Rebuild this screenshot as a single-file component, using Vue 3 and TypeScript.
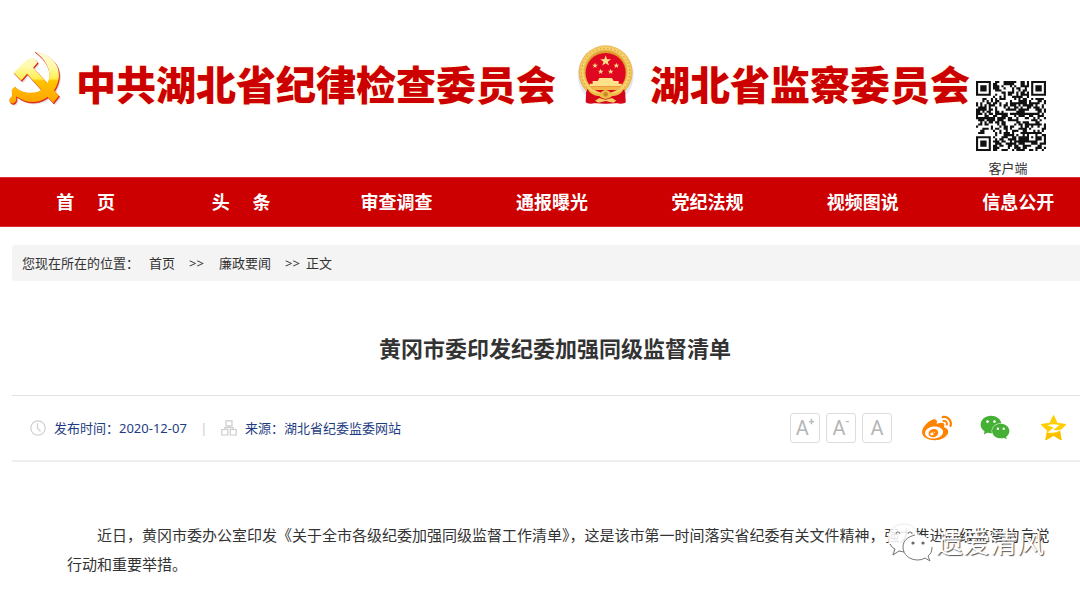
<script setup lang="ts">
interface Module { x: number; y: number }

const navItems: string[] = ['首\u3000 页', '头\u3000 条', '审查调查', '通报曝光', '党纪法规', '视频图说', '信息公开']

const sizeButtons = [
  { label: '放大字号', sign: '+' },
  { label: '缩小字号', sign: '-' },
  { label: '默认字号', sign: '' },
]

const QR_SIZE = 33

function ringed(x: number, y: number, cx: number, cy: number, radius: number): boolean | null {
  const d = Math.max(Math.abs(x - cx), Math.abs(y - cy))
  if (d > radius + 1) return null
  if (radius === 3) return d === 3 || d <= 1
  return d === 2 || d === 0
}

function buildCode(): Module[] {
  const out: Module[] = []
  let seed = 20201207
  for (let y = 0; y < QR_SIZE; y++) {
    for (let x = 0; x < QR_SIZE; x++) {
      seed = (seed * 1103515245 + 12345) % 2147483648
      let dark = (seed >> 12) % 100 < 53
      const marks = [ringed(x, y, 3, 3, 3), ringed(x, y, 29, 3, 3), ringed(x, y, 3, 29, 3)]
      const finder = marks.find((m) => m !== null)
      if (finder !== undefined && finder !== null) dark = finder
      else if (Math.max(Math.abs(x - 26), Math.abs(y - 26)) <= 2) dark = ringed(x, y, 26, 26, 2) === true
      if (dark) out.push({ x, y })
    }
  }
  return out
}

const codePath = buildCode().map((m) => `M${m.x} ${m.y}h1v1h-1z`).join('')

const star = 'M0 -10L2.4 -3.2L9.5 -3.1L3.8 1.2L5.9 8.1L0 4L-5.9 8.1L-3.8 1.2L-9.5 -3.1L-2.4 -3.2z'
const smallStars = [
  { x: 106, y: 90 },
  { x: 170, y: 90 },
  { x: 123, y: 108 },
  { x: 153, y: 108 },
]
const weibo = 'M10.098 20.323c-3.977.391-7.414-1.406-7.672-4.02-.259-2.609 2.759-5.047 6.74-5.441 3.979-.394 7.413 1.404 7.671 4.018.259 2.6-2.759 5.049-6.737 5.439l-.002.004zM9.05 17.219c-.384.616-1.208.884-1.829.602-.612-.279-.793-.991-.406-1.593.379-.595 1.176-.861 1.793-.601.622.263.82.972.442 1.592zm1.27-1.627c-.141.237-.449.353-.689.253-.236-.09-.313-.361-.177-.586.138-.227.436-.346.672-.24.239.09.315.36.18.601l.014-.028zm.176-2.719c-1.893-.493-4.033.45-4.857 2.118-.836 1.704-.026 3.591 1.886 4.21 1.983.64 4.318-.341 5.132-2.179.8-1.793-.201-3.642-2.161-4.149zm7.563-1.224c-.346-.105-.57-.18-.405-.615.375-.977.42-1.804 0-2.404-.781-1.112-2.915-1.053-5.364-.03 0 0-.766.331-.571-.271.376-1.217.315-2.224-.27-2.809-1.338-1.337-4.869.045-7.888 3.08C1.309 10.87 0 13.273 0 15.348c0 3.981 5.099 6.395 10.086 6.395 6.536 0 10.888-3.801 10.888-6.82 0-1.822-1.547-2.854-2.915-3.284v.01zm1.908-5.092c-.766-.856-1.908-1.187-2.96-.962-.436.09-.706.511-.616.932.09.42.511.691.932.602.511-.105 1.067.044 1.442.465.376.421.466.977.316 1.473-.136.406.089.856.51.992.405.119.857-.105.992-.512.33-1.021.12-2.178-.646-3.035l.03.045zm2.418-2.195c-1.576-1.757-3.905-2.419-6.054-1.968-.496.104-.812.587-.706 1.081.104.496.586.813 1.082.707 1.532-.331 3.185.15 4.296 1.383 1.112 1.246 1.429 2.943.947 4.416-.165.48.106 1.007.586 1.157.479.165.991-.104 1.157-.586.675-2.088.241-4.478-1.338-6.235l.03.045z'
const wechat = 'M8.691 2.188C3.891 2.188 0 5.476 0 9.53c0 2.212 1.17 4.203 3.002 5.55a.59.59 0 0 1 .213.665l-.39 1.48c-.019.07-.048.141-.048.213 0 .163.13.295.29.295a.326.326 0 0 0 .167-.054l1.903-1.114a.864.864 0 0 1 .717-.098 10.16 10.16 0 0 0 2.837.403c.276 0 .543-.027.811-.05-.857-2.578.157-4.972 1.932-6.446 1.703-1.415 3.882-1.98 5.853-1.838-.576-3.583-4.196-6.348-8.596-6.348zM5.785 5.991c.642 0 1.162.529 1.162 1.18a1.17 1.17 0 0 1-1.162 1.178A1.17 1.17 0 0 1 4.623 7.17c0-.651.52-1.18 1.162-1.18zm5.813 0c.642 0 1.162.529 1.162 1.18a1.17 1.17 0 0 1-1.162 1.178 1.17 1.17 0 0 1-1.162-1.178c0-.651.52-1.18 1.162-1.18zm5.34 2.867c-1.797-.052-3.746.512-5.28 1.786-1.72 1.428-2.687 3.72-1.78 6.22.942 2.453 3.666 4.229 6.884 4.229.826 0 1.622-.12 2.361-.336a.722.722 0 0 1 .598.082l1.584.926a.272.272 0 0 0 .14.047c.134 0 .24-.111.24-.247 0-.06-.023-.12-.038-.177l-.327-1.233a.582.582 0 0 1-.023-.156.49.49 0 0 1 .201-.398C23.024 18.48 24 16.82 24 14.98c0-3.21-2.931-5.837-6.656-6.088V8.89c-.135-.01-.27-.027-.407-.03zm-2.53 3.274c.535 0 .969.44.969.982a.976.976 0 0 1-.969.983.976.976 0 0 1-.969-.983c0-.542.434-.982.97-.982zm4.844 0c.535 0 .969.44.969.982a.976.976 0 0 1-.969.983.976.976 0 0 1-.969-.983c0-.542.434-.982.969-.982z'
</script>

<template>
  <div class="page" lang="zh-CN">
    <header class="header">
      <svg class="party" viewBox="24 30 159 168" aria-hidden="true">
        <defs>
          <linearGradient id="gold" gradientUnits="userSpaceOnUse" x1="0" y1="35" x2="0" y2="190">
            <stop offset="0" stop-color="#fffbe0" />
            <stop offset="0.3" stop-color="#fff9a8" />
            <stop offset="0.52" stop-color="#ffee50" />
            <stop offset="0.56" stop-color="#ffc400" />
            <stop offset="1" stop-color="#ffa200" />
          </linearGradient>
          <g id="tools">
            <path d="M103 35C150 42 177 74 175 108C173 136 158 160 136 173C108 190 76 187 54 170L49 168Q51 184 42 188Q31 190 29 181Q28 172 37 167L36 148L44 139C68 161 104 163 127 146C160 119 152 70 103 35z" />
            <path d="M42 98L80 60Q96 50 105 59L112 68L99 83L175 166L158 187L81 101L64 121z" />
          </g>
        </defs>
        <use href="#tools" transform="translate(5 6)" fill="#8a8a8a" opacity="0.22" />
        <use href="#tools" fill="#dc2418" stroke="#dc2418" stroke-width="2" transform="translate(1 2)" />
        <use href="#tools" fill="url(#gold)" transform="translate(-1 -1)" />
      </svg>
      <h1 class="brand">中共湖北省纪律检查委员会</h1>
      <svg class="state" viewBox="52 25 171 186" aria-hidden="true">
        <defs>
          <radialGradient id="rim" gradientUnits="userSpaceOnUse" cx="138" cy="108" r="81">
            <stop offset="0.74" stop-color="#dd9a2c" />
            <stop offset="0.86" stop-color="#fbdc78" />
            <stop offset="1" stop-color="#e9b04a" />
          </radialGradient>
        </defs>
        <ellipse cx="138" cy="119" rx="84" ry="87" fill="#8aa9d6" opacity="0.25" />
        <path d="M80 155L78 200Q138 208 198 200L196 155z" fill="#d3061b" />
        <circle cx="138" cy="110" r="81" fill="url(#rim)" />
        <circle cx="138" cy="110" r="72" fill="none" stroke="#d59430" stroke-width="3" stroke-dasharray="5 6" />
        <circle cx="138" cy="112" r="60" fill="#e00720" />
        <g fill="#ffe18a">
          <path :d="star" transform="translate(138 76) scale(1.7)" />
          <path v-for="s in smallStars" :key="`${s.x}-${s.y}`" :d="star" :transform="`translate(${s.x} ${s.y}) scale(.9)`" />
          <path d="M119 127h38l5 9h15v8h9v8H90v-8h9v-8h15z" />
        </g>
        <path d="M90 152h96l-10 11h-76z" fill="#f0b94a" />
        <path d="M82 159Q104 184 123 178Q124 164 138 164Q152 164 153 178Q174 184 194 159L197 201Q178 208 164 198L138 191L112 198Q98 208 80 201z" fill="#d5061a" />
        <path d="M83 158Q98 173 122 174Q128 163 138 163Q149 163 154 174Q179 173 193 158Q184 181 158 181Q149 190 138 190Q128 190 118 181Q94 181 83 158z" fill="#edbd48" />
        <path d="M106 195L119 187L138 192L157 187L170 195L161 201L138 196L116 201z" fill="#f5cf63" />
        <circle cx="138" cy="176" r="7" fill="#cb8a26" />
      </svg>
      <h1 class="brand">湖北省监察委员会</h1>
      <a class="client" href="#client">
        <svg class="code" :viewBox="`0 0 ${QR_SIZE} ${QR_SIZE}`" aria-hidden="true"><path :d="codePath" fill="#111" /></svg>
        <span>客户端</span>
      </a>
    </header>

    <nav class="nav">
      <div class="nav-row">
        <a v-for="item in navItems" :key="item" href="#nav">{{ item }}</a>
      </div>
    </nav>

    <main class="content">
      <div class="crumbs">
        <span>您现在所在的位置：</span>
        <a class="home" href="#home">首页</a>
        <span class="sep">&gt;&gt;</span>
        <a href="#news">廉政要闻</a>
        <span class="sep">&gt;&gt;</span>
        <span class="current">正文</span>
      </div>

      <h2 class="title">黄冈市委印发纪委加强同级监督清单</h2>

      <div class="meta">
        <svg class="meta-icon" viewBox="0 0 16 16" aria-hidden="true">
          <g fill="none" stroke="#d0d0d0" stroke-width="1.2"><circle cx="8" cy="8" r="7.2" /><path d="M7.5 3.2V8.4L10.5 11.5" /></g>
        </svg>
        <span>发布时间：2020-12-07</span>
        <span class="bar">|</span>
        <svg class="meta-icon" viewBox="0 0 16 16" aria-hidden="true">
          <g fill="none" stroke="#ccc" stroke-width="1.2"><path d="M5 .8h6v5H5zM.8 9.5h6v5.5h-6zM9.2 9.5h6v5.5h-6zM8 6v1.7M3.8 9.5V7.7h8.4v1.8" /></g>
        </svg>
        <span>来源：湖北省纪委监委网站</span>
        <div class="sizes">
          <button v-for="b in sizeButtons" :key="b.label" type="button" :aria-label="b.label">A<sup v-if="b.sign">{{ b.sign }}</sup></button>
        </div>
        <div class="share">
          <button type="button" aria-label="分享到微博"><svg viewBox="0 0 24 24"><path :d="weibo" fill="#ff8200" /></svg></button>
          <button type="button" aria-label="分享到微信"><svg viewBox="-0.500 0 25 25"><path :d="wechat" fill="#45b035" /></svg></button>
          <button type="button" aria-label="分享到QQ空间">
            <svg viewBox="0 0 30 30">
              <path d="M15.500 2.500L19.200 10.300L28 11.500L21.600 17.500L23.300 27L15.500 22.500L7.700 27L9.400 17.500L3 11.500L11.800 10.300z" fill="#ffce00" stroke="#ffce00" stroke-linejoin="round" />
              <path d="M9.500 20.500Q17 21.800 22 19L23.300 27L15.500 22.500L7.700 27z" fill="#f9bd00" />
              <path d="M9.500 12.300Q15 10.500 21.500 12L15.300 17Q18.500 17.800 23 16.500Q18 20.700 9.500 19.500L15.800 14.400Q13 13.600 9.500 12.300z" fill="#fff" />
            </svg>
          </button>
        </div>
      </div>

      <article class="article">
        <p>近日，黄冈市委办公室印发《关于全市各级纪委加强同级监督工作清单》，这是该市第一时间落实省纪委有关文件精神，强力推进同级监督的自觉行动和重要举措。</p>
        <div class="watermark">
          <svg viewBox="0 0 46 42" aria-hidden="true">
            <path d="M17 2C8 2 1 8 1 16C1 21 4 25 7 27L5 33L12 29Q17 31 22 29C35 26 35 2 17 2z" fill="#fff" fill-opacity="0.88" stroke="#ddd" stroke-width="0.6" />
            <path d="M3 22Q5 26 8 27L6 33L12 29L17 30" fill="none" stroke="#777" />
            <path d="M31 13C22 13 16 19 16 25C16 33 23 38 31 38Q35 38 38 36L43 39L41 34C44 32 45 29 45 25C45 18 39 13 31 13z" fill="#fff" />
            <path d="M28 13C20 15 16 19 16 25C16 33 23 38 31 38Q35 38 38 36L43 39L41 34C44 32 45 29 45 25" fill="none" stroke="#777" />
            <g fill="none" stroke="#777"><path d="M9 12a2 2 0 0 1 4 0M21 12a2 2 0 0 1 4 0" /></g>
            <g fill="#666"><circle cx="26" cy="21" r="1.600" /><circle cx="36" cy="21" r="1.600" /></g>
          </svg>
          <span>遗爱清风</span>
        </div>
      </article>
    </main>
  </div>
</template>

<style>
body {
  margin: 0;
  background: #fff;
}
</style>

<style scoped>
.page {
  overflow: hidden;
  color: #333;
  font-family: "Noto Sans", "Noto Sans CJK SC", sans-serif;
  font-size: 13px;
}

a {
  color: inherit;
  text-decoration: none;
}

button {
  padding: 0;
  background: none;
  border: 0;
  cursor: pointer;
}

svg {
  display: block;
  flex: none;
}

.header {
  display: flex;
  align-items: flex-start;
  padding: 44px 0 0 8px;
}

.party {
  width: 54px;
  height: 57px;
  margin: 6px 14px 0 0;
}

.brand {
  flex: none;
  margin: 9px 0 0;
  color: #c00;
  font-family: "Noto Sans CJK SC", sans-serif;
  font-size: 40px;
  font-weight: 900;
  line-height: 60px;
  white-space: nowrap;
  text-shadow: 0 0 3px #fff0c8;
}

.state {
  width: 57px;
  height: 62px;
  margin: 0 16px 0 21px;
}

.client {
  display: flex;
  flex: none;
  flex-direction: column;
  align-items: center;
  gap: 8px;
  margin: 37px 0 0 6px;
  line-height: 18px;
}

.code {
  width: 70px;
  height: 70px;
}

.client span {
  margin-right: 6px;
}

.nav {
  overflow: hidden;
  background: #c00;
  border-top: 1px solid #dc3030;
  border-bottom: 1px solid #dc3030;
}

.nav-row {
  display: grid;
  grid-template-columns: repeat(7, 1fr);
  margin: 0 -16px 0 8px;
}

.nav a {
  color: #fff;
  font-size: 18px;
  font-weight: 700;
  line-height: 48px;
  text-align: center;
  white-space: pre;
}

.content {
  margin: 18px -18px 0 12px;
}

.crumbs {
  display: flex;
  align-items: center;
  padding: 0 10px;
  line-height: 36px;
  background: #f4f4f4;
  border-radius: 3px;
}

.home {
  margin-left: 10px;
}

.sep {
  width: 17px;
  margin: 0 13px 0 14px;
}

.current {
  margin-left: -9px;
}

.title {
  margin: 49px 0 29px;
  font-size: 22px;
  font-weight: 700;
  line-height: 36px;
  text-align: center;
}

.meta {
  display: flex;
  align-items: center;
  padding: 16px 30px 16px 18px;
  color: #1e3c82;
  line-height: 32px;
  border-top: 1px solid #e2e2e2;
  border-bottom: 2px solid #eee;
}

.meta-icon {
  width: 16px;
  height: 16px;
  margin-right: 8px;
}

.bar {
  width: 34px;
  color: #ccc;
  text-align: center;
}

.sizes {
  display: flex;
  gap: 6px;
  margin-left: auto;
}

.sizes button {
  display: flex;
  align-items: center;
  justify-content: center;
  width: 30px;
  height: 30px;
  color: #b5b5b5;
  font-family: Roboto, sans-serif;
  font-size: 20px;
  border: 1px solid #ddd;
  border-radius: 3px;
}

.sizes sup {
  align-self: flex-start;
  font-size: 10px;
  font-weight: 700;
  line-height: 16px;
}

.share {
  display: flex;
  gap: 28px;
  margin-left: 30px;
}

.share svg {
  width: 30px;
  height: 30px;
}

.article {
  position: relative;
  margin-top: 59px;
}

.article p {
  margin: 0;
  padding: 0 41px 0 55px;
  font-size: 15px;
  line-height: 29px;
  text-indent: 2em;
}

.watermark {
  position: absolute;
  top: 1px;
  right: 54px;
  display: flex;
  align-items: center;
  gap: 3px;
  color: #fff;
  font-size: 27px;
  line-height: 42px;
  text-shadow: 1px 1px 1px #555;
}

.watermark svg {
  width: 46px;
  height: 42px;
}
</style>
